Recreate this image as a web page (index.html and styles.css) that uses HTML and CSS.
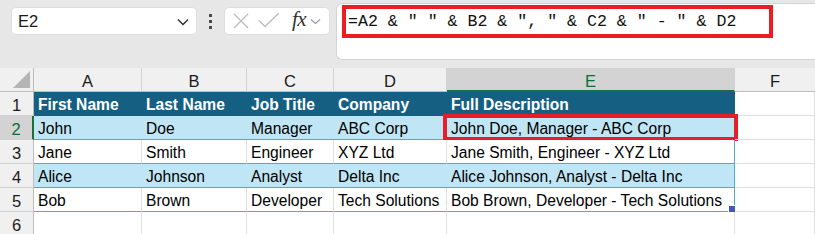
FILE: index.html
```html
<!DOCTYPE html>
<html lang="en">
<head>
<meta charset="utf-8">
<title>Sheet</title>
<link rel="stylesheet" href="styles.css">
</head>
<body>
<div class="toolbar">
  <div class="namebox">
    <span class="name">E2</span>
    <svg class="chev" width="12" height="8" viewBox="0 0 12 8"><path d="M1 1.5 L6 6.5 L11 1.5" fill="none" stroke="#2b2b2b" stroke-width="1.4"/></svg>
  </div>
  <div class="dots"><i></i><i></i><i></i></div>
  <div class="fnbox">
    <svg width="18" height="18" viewBox="0 0 18 18" class="ic-x"><path d="M2 2 L16 16 M16 2 L2 16" stroke="#bcbcbc" stroke-width="1.3" fill="none"/></svg>
    <svg width="22" height="16" viewBox="0 0 22 16" class="ic-check"><path d="M1 8.5 L7 14.5 L21 1" stroke="#bcbcbc" stroke-width="1.3" fill="none"/></svg>
    <span class="fx">fx</span>
    <svg width="11" height="7" viewBox="0 0 11 7" class="ic-chev2"><path d="M1 1.5 L5.5 5.5 L10 1.5" stroke="#9a9a9a" stroke-width="1.2" fill="none"/></svg>
  </div>
  <div class="formula">
    <span class="ftext">=A2 &amp; " " &amp; B2 &amp; ", " &amp; C2 &amp; " - " &amp; D2</span>
    <div class="redbox formula-box"></div>
  </div>
</div>
<div class="sheet">
  <div class="corner"><span class="tri"></span></div>
  <div class="ch">A</div><div class="ch">B</div><div class="ch">C</div><div class="ch">D</div><div class="ch sel">E</div><div class="ch last">F</div>

  <div class="rh">1</div>
  <div class="c hd">First Name</div><div class="c hd">Last Name</div><div class="c hd">Job Title</div><div class="c hd">Company</div><div class="c hd">Full Description</div><div class="c blank"></div>

  <div class="rh sel">2</div>
  <div class="c band">John</div><div class="c band">Doe</div><div class="c band">Manager</div><div class="c band">ABC Corp</div><div class="c band edge active">John Doe, Manager - ABC Corp<div class="redbox cell-box"></div></div><div class="c blank"></div>

  <div class="rh">3</div>
  <div class="c plain">Jane</div><div class="c plain">Smith</div><div class="c plain">Engineer</div><div class="c plain">XYZ Ltd</div><div class="c plain edge">Jane Smith, Engineer - XYZ Ltd</div><div class="c blank"></div>

  <div class="rh">4</div>
  <div class="c band">Alice</div><div class="c band">Johnson</div><div class="c band">Analyst</div><div class="c band">Delta Inc</div><div class="c band edge">Alice Johnson, Analyst - Delta Inc</div><div class="c blank"></div>

  <div class="rh">5</div>
  <div class="c plain">Bob</div><div class="c plain">Brown</div><div class="c plain">Developer</div><div class="c plain">Tech Solutions</div><div class="c plain edge handle">Bob Brown, Developer - Tech Solutions<span class="fill"></span></div><div class="c blank"></div>

  <div class="rh">6</div>
  <div class="c blank"></div><div class="c blank"></div><div class="c blank"></div><div class="c blank"></div><div class="c blank"></div><div class="c blank"></div>
</div>
</body>
</html>
```

FILE: styles.css
```css
* { box-sizing: border-box; }
html, body { margin: 0; padding: 0; }
body {
  width: 815px;
  height: 234px;
  overflow: hidden;
  background: #ffffff;
  font-family: "Liberation Sans", Arial, sans-serif;
  color: #000;
}

.toolbar {
  height: 68px;
  background: #e8e7e8;
  display: flex;
  align-items: flex-start;
  padding-left: 11px;
}

.namebox {
  margin-top: 7px;
  width: 186px;
  height: 28px;
  background: #fff;
  border: 1px solid #dedede;
  border-radius: 5px;
  display: flex;
  align-items: center;
  justify-content: space-between;
  padding: 0 7px 0 6px;
}
.name { font-size: 16.5px; color: #1a1a1a; }
.chev { display: block; margin-top: 1px; }

.dots {
  width: 27px;
  height: 28px;
  margin-top: 7px;
  display: flex;
  flex-direction: column;
  align-items: center;
  justify-content: center;
  gap: 3px;
}
.dots i { display: block; width: 3px; height: 3px; background: #4a4a4a; }

.fnbox {
  margin-top: 7px;
  width: 106px;
  height: 28px;
  background: #fff;
  border: 1px solid #dedede;
  border-radius: 5px;
  display: flex;
  align-items: center;
  padding-left: 7px;
}
.ic-x { display: block; }
.ic-check { display: block; margin-left: 8px; margin-top: -2px; }
.fx {
  font-family: "Liberation Serif", "Times New Roman", serif;
  font-style: italic;
  font-size: 21px;
  color: #333;
  margin-left: 12px;
  letter-spacing: -0.5px;
  line-height: 1;
  margin-top: -3px;
}
.ic-chev2 { display: block; margin-left: 4px; }

.formula {
  position: relative;
  margin-top: 3px;
  margin-left: 6px;
  flex: 1;
  height: 57px;
  background: #fff;
  border: 1px solid #d4d4d4;
  border-right: none;
  border-radius: 6px 0 0 6px;
  padding: 8px 0 0 11px;
}
.ftext {
  font-family: "Liberation Mono", "Courier New", monospace;
  font-size: 16.6px;
  line-height: 20px;
  color: #111;
  white-space: pre;
}

.redbox {
  position: absolute;
  border: 4px solid #ea1c24;
  pointer-events: none;
}
.formula-box { left: 5px; top: 1px; width: 431px; height: 33px; }

.sheet {
  display: grid;
  grid-template-columns: 34px 108px 105px 87px 113px 288px 1fr;
  grid-template-rows: 24px repeat(6, 24px);
  font-size: 15.6px;
}

.corner {
  position: relative;
  background: #f0f0f0;
  border-right: 1px solid #bdbdbd;
  border-bottom: 1px solid #bdbdbd;
}
.tri {
  position: absolute;
  right: 3px;
  bottom: 3px;
  width: 0;
  height: 0;
  border-left: 17px solid transparent;
  border-bottom: 17px solid #b4b4b4;
}

.ch {
  background: #f0f0f0;
  border-right: 1px solid #d2d2d2;
  border-bottom: 1px solid #bdbdbd;
  text-align: center;
  line-height: 24px;
  padding-top: 1px;
  font-size: 16.5px;
  color: #1a1a1a;
}
.ch.sel {
  background: #d3d3d3;
  color: #0e6b3a;
  border-bottom: 2px solid #1b6e3e;
}
.ch.last { border-right: none; }

.rh {
  background: #f0f0f0;
  border-right: 1px solid #bdbdbd;
  border-bottom: 1px solid #d2d2d2;
  text-align: center;
  line-height: 24px;
  padding-top: 1px;
  font-size: 16.5px;
  color: #1a1a1a;
}
.rh.sel {
  background: #d3d3d3;
  color: #0e6b3a;
  border-right: 2px solid #1b6e3e;
}

.c {
  line-height: 24px;
  padding: 1px 0 0 4px;
  white-space: nowrap;
  overflow: visible;
  position: relative;
}
.c.hd {
  background: #156082;
  color: #fff;
  font-weight: bold;
  padding-left: 4px;
}
.c.band {
  background: #c0e6f5;
  border-bottom: 1px solid #4fa9d9;
}
.c.plain {
  background: #fff;
  border-right: 1px solid #e0e0e0;
  border-bottom: 1px solid #4fa9d9;
}
.c.edge { border-right: 1px solid #4fa9d9; }
.c.blank {
  border-right: 1px solid #e0e0e0;
  border-bottom: 1px solid #e0e0e0;
}
.cell-box { left: -4px; top: -2px; right: -4px; bottom: -2px; }
.fill {
  position: absolute;
  right: -1px;
  bottom: -1px;
  width: 7px;
  height: 7px;
  background: #4456c2;
  border-left: 1px solid #fff;
  border-top: 1px solid #fff;
}
```
